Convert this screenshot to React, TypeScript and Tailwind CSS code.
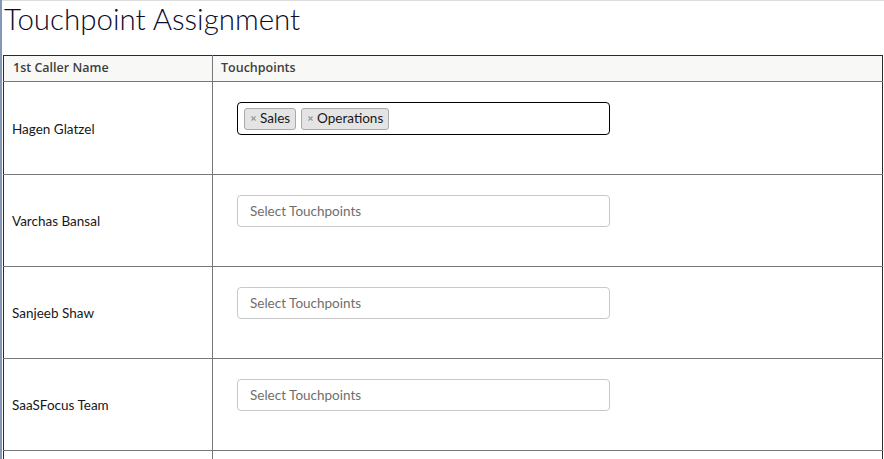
import { X } from "lucide-react";

const rows = [
  { name: "Hagen Glatzel", tags: ["Sales", "Operations"] },
  { name: "Varchas Bansal", tags: [] as string[] },
  { name: "Sanjeeb Shaw", tags: [] as string[] },
  { name: "SaaSFocus Team", tags: [] as string[] },
];

function TouchpointInput({ tags }: { tags: string[] }) {
  if (tags.length > 0) {
    return (
      <div className="flex h-[33px] w-[373px] items-center gap-[5px] rounded-[4px] border border-black bg-white px-[6px]">
        {tags.map((t) => (
          <span
            key={t}
            className="flex h-[22px] items-center gap-[3px] rounded-[3px] border border-[#aaaaaa] bg-[#e4e4e4] px-[5px] text-[13.5px] text-[#181818]"
          >
            <X size={7} strokeWidth={4} className="text-[#999]" />
            {t}
          </span>
        ))}
      </div>
    );
  }
  return (
    <div className="flex h-[32px] w-[373px] items-center rounded-[4px] border border-[#c9c9c9] bg-white px-[12px] text-[13.5px] text-[#706e6b]">
      Select Touchpoints
    </div>
  );
}

export default function App() {
  return (
    <div className="flex h-[459px] w-[884px] overflow-hidden bg-white font-['Lato','Noto_Sans',sans-serif]">
      <div className="w-[2px] shrink-0 bg-[#8497b8]" />
      <div className="flex-1 border-t border-[#dddddd]">
        <h1 className="ml-[2px] mt-[2px] h-[52px] text-[29.5px] font-light leading-[32px] text-[#0b0b2a]">
          Touchpoint Assignment
        </h1>
        <table className="ml-[1px] w-[880px] border-collapse border border-[#2b2b2b] text-left">
          <thead>
            <tr className="h-[26px] bg-[#f8f8f6]">
              <th className="w-[209px] border-b border-r border-[#777] px-[9px] font-['Open_Sans',sans-serif] text-[12.5px] font-semibold text-[#3e3e3c]">
                1st Caller Name
              </th>
              <th className="border-b border-[#777] px-[8px] font-['Open_Sans',sans-serif] text-[12.5px] font-semibold text-[#3e3e3c]">
                Touchpoints
              </th>
            </tr>
          </thead>
          <tbody>
            {rows.map((r, i) => (
              <tr key={i} className={i === 0 ? "h-[93px]" : "h-[92px]"}>
                <td className="border-b border-r border-[#777] px-[8px] pt-[2px] align-middle text-[13.5px] text-[#181818]">
                  {r.name}
                </td>
                <td className="border-b border-[#777] pl-[24px] pt-[20px] align-top">
                  <TouchpointInput tags={r.tags} />
                </td>
              </tr>
            ))}
            <tr className="h-[92px]">
              <td className="border-b border-r border-[#777]" />
              <td className="border-b border-[#777]" />
            </tr>
          </tbody>
        </table>
      </div>
    </div>
  );
}
